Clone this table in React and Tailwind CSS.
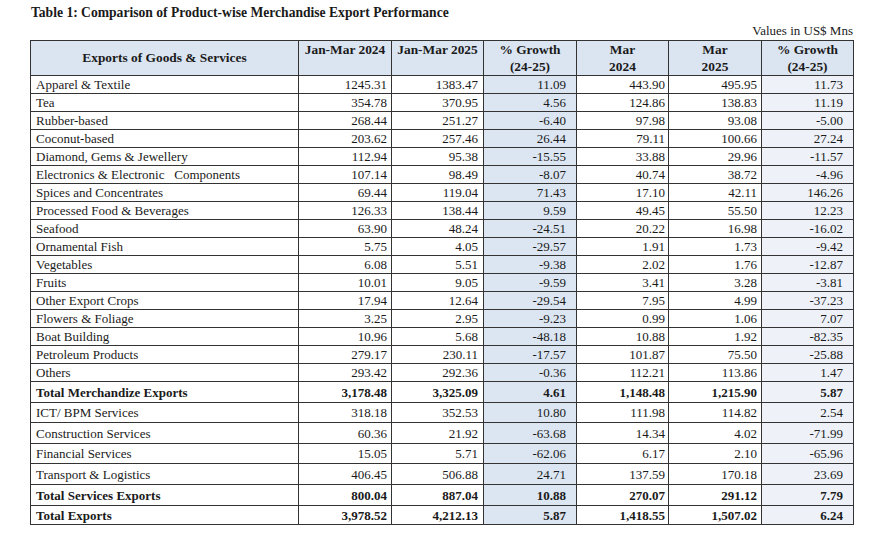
import React from "react";

const rows = [
  ["Apparel & Textile", "1245.31", "1383.47", "11.09", "443.90", "495.95", "11.73"],
  ["Tea", "354.78", "370.95", "4.56", "124.86", "138.83", "11.19"],
  ["Rubber-based", "268.44", "251.27", "-6.40", "97.98", "93.08", "-5.00"],
  ["Coconut-based", "203.62", "257.46", "26.44", "79.11", "100.66", "27.24"],
  ["Diamond, Gems & Jewellery", "112.94", "95.38", "-15.55", "33.88", "29.96", "-11.57"],
  ["Electronics & Electronic\u00a0\u00a0\u00a0Components", "107.14", "98.49", "-8.07", "40.74", "38.72", "-4.96"],
  ["Spices and Concentrates", "69.44", "119.04", "71.43", "17.10", "42.11", "146.26"],
  ["Processed Food & Beverages", "126.33", "138.44", "9.59", "49.45", "55.50", "12.23"],
  ["Seafood", "63.90", "48.24", "-24.51", "20.22", "16.98", "-16.02"],
  ["Ornamental Fish", "5.75", "4.05", "-29.57", "1.91", "1.73", "-9.42"],
  ["Vegetables", "6.08", "5.51", "-9.38", "2.02", "1.76", "-12.87"],
  ["Fruits", "10.01", "9.05", "-9.59", "3.41", "3.28", "-3.81"],
  ["Other Export Crops", "17.94", "12.64", "-29.54", "7.95", "4.99", "-37.23"],
  ["Flowers & Foliage", "3.25", "2.95", "-9.23", "0.99", "1.06", "7.07"],
  ["Boat Building", "10.96", "5.68", "-48.18", "10.88", "1.92", "-82.35"],
  ["Petroleum Products", "279.17", "230.11", "-17.57", "101.87", "75.50", "-25.88"],
  ["Others", "293.42", "292.36", "-0.36", "112.21", "113.86", "1.47"],
];

const lower = [
  { cells: ["Total Merchandize Exports", "3,178.48", "3,325.09", "4.61", "1,148.48", "1,215.90", "5.87"], bold: true, h: "h-[21px]" },
  { cells: ["ICT/ BPM Services", "318.18", "352.53", "10.80", "111.98", "114.82", "2.54"], h: "h-[20px]" },
  { cells: ["Construction Services", "60.36", "21.92", "-63.68", "14.34", "4.02", "-71.99"], h: "h-[21px]" },
  { cells: ["Financial Services", "15.05", "5.71", "-62.06", "6.17", "2.10", "-65.96"], h: "h-[20px]" },
  { cells: ["Transport & Logistics", "406.45", "506.88", "24.71", "137.59", "170.18", "23.69"], h: "h-[21px]" },
  { cells: ["Total Services Exports", "800.04", "887.04", "10.88", "270.07", "291.12", "7.79"], bold: true, h: "h-[21px]" },
  { cells: ["Total Exports", "3,978.52", "4,212.13", "5.87", "1,418.55", "1,507.02", "6.24"], bold: true, h: "h-[19px]" },
];

const Row = ({ cells, bold, h }) => (
  <tr className={`${h} ${bold ? "font-bold" : ""}`}>
    <td className="border border-[#333] pl-[5px] text-left whitespace-nowrap">{cells[0]}</td>
    <td className="border border-[#333] pr-[4px] text-right">{cells[1]}</td>
    <td className="border border-[#333] pr-[5px] text-right">{cells[2]}</td>
    <td className="border border-[#333] pr-[10px] text-right bg-[#dce6f2]">{cells[3]}</td>
    <td className="border border-[#333] pr-[3px] text-right">{cells[4]}</td>
    <td className="border border-[#333] pr-[4px] text-right">{cells[5]}</td>
    <td className="border border-[#333] pr-[10px] text-right bg-[#eef2f8]">{cells[6]}</td>
  </tr>
);

const App = () => {
  return (
    <div
      className="w-[885px] h-[540px] bg-white pl-[30px] pt-[4px] text-[#1a1a1a] text-[13px] leading-[17px]"
      style={{ fontFamily: '"Liberation Serif", serif' }}
    >
      <div className="w-[823px]">
        <div className="font-bold pl-px text-[13.6px] leading-[18px]">
          Table 1: Comparison of Product-wise Merchandise Export Performance
        </div>
        <div className="text-right leading-[18px]">Values in US$ Mns</div>

        <table className="w-[823px] table-fixed border-collapse border border-[#333]">
          <colgroup>
            <col className="w-[268px]" />
            <col className="w-[93px]" />
            <col className="w-[92px]" />
            <col className="w-[93px]" />
            <col className="w-[92px]" />
            <col className="w-[93px]" />
            <col className="w-[92px]" />
          </colgroup>
          <thead>
            <tr className="h-[35px] bg-[#dbe5f1] font-bold text-[13.4px]">
              <th className="border border-[#333] text-center align-middle pb-[2px]">Exports of Goods &amp; Services</th>
              <th className="border border-[#333] text-center align-top">Jan-Mar 2024</th>
              <th className="border border-[#333] text-center align-top">Jan-Mar 2025</th>
              <th className="border border-[#333] text-center align-top">% Growth<br />(24-25)</th>
              <th className="border border-[#333] text-center align-top">Mar<br />2024</th>
              <th className="border border-[#333] text-center align-top">Mar<br />2025</th>
              <th className="border border-[#333] text-center align-top">% Growth<br />(24-25)</th>
            </tr>
          </thead>
          <tbody>
            {rows.map((r, i) => (
              <Row key={i} cells={r} h="h-[18px]" />
            ))}
            {lower.map((r, i) => (
              <Row key={`l${i}`} cells={r.cells} bold={r.bold} h={r.h} />
            ))}
          </tbody>
        </table>
      </div>
    </div>
  );
};

export default App;
